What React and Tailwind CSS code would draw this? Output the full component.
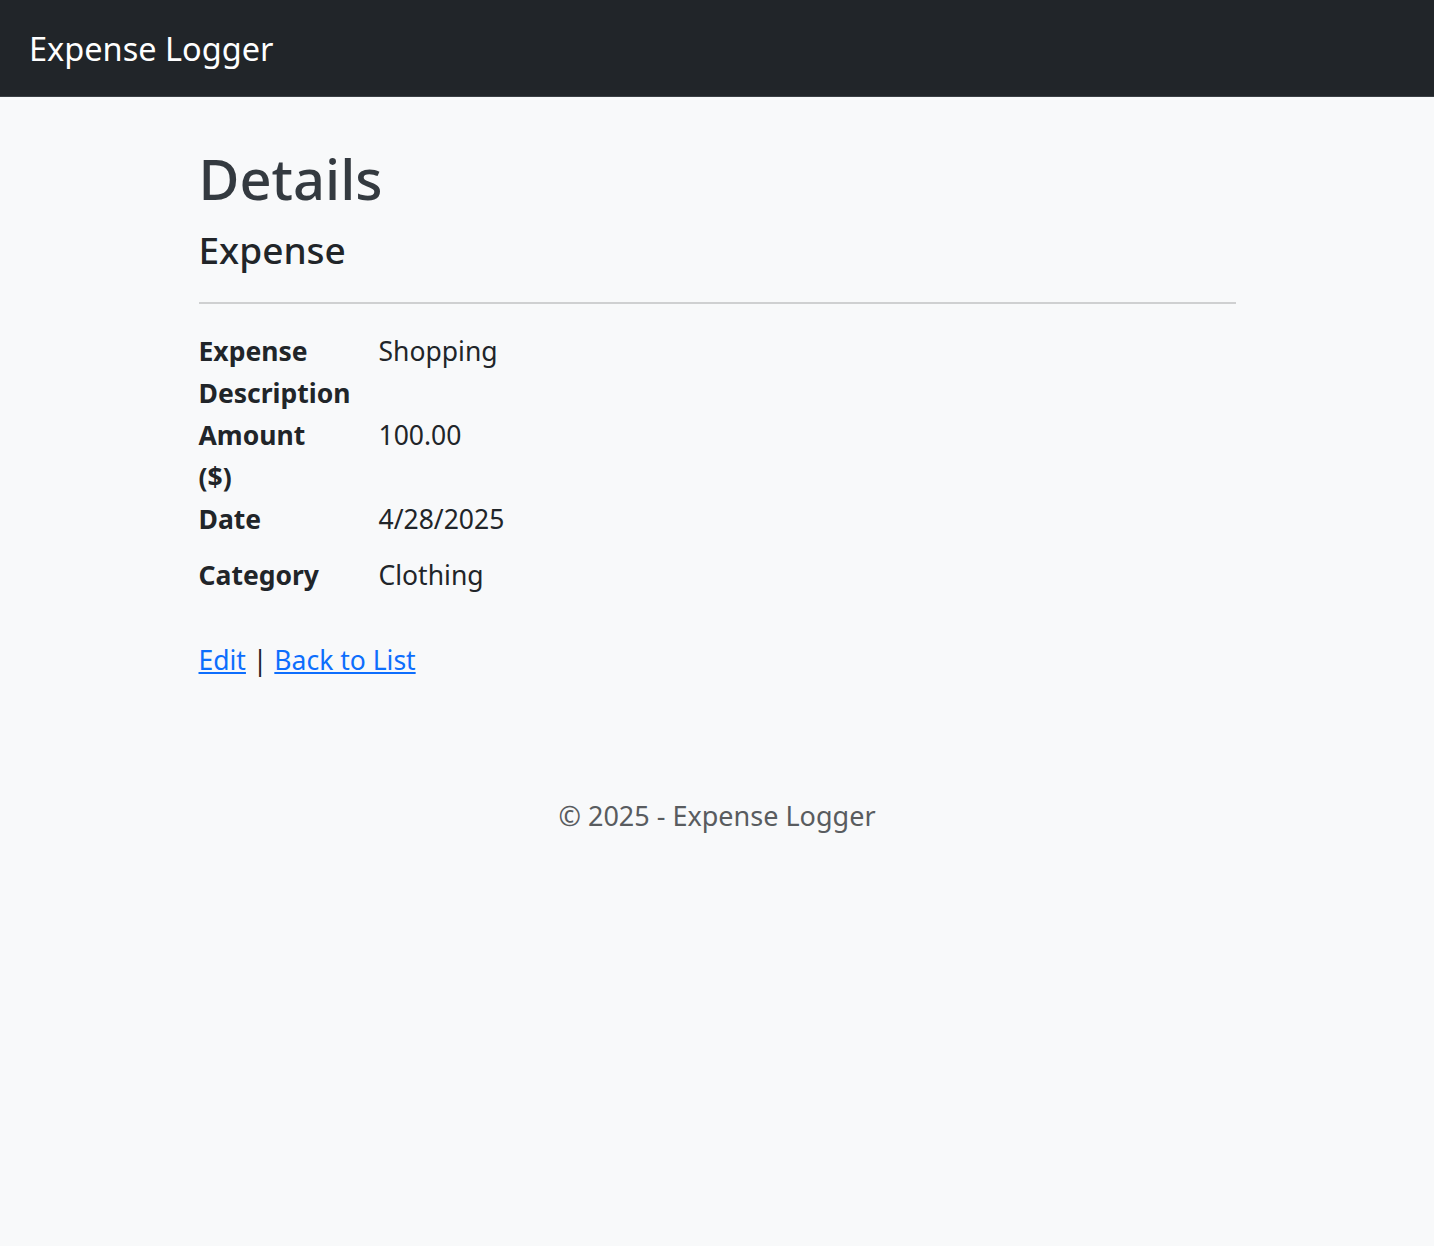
import React from 'react';

// Linhas da lista de detalhes
const detalhes = [
  { rotulo: 'Expense Description', valor: 'Shopping' },
  { rotulo: 'Amount ($)', valor: '100.00' },
  { rotulo: 'Date', valor: '4/28/2025' },
  { rotulo: 'Category', valor: 'Clothing' },
];

export default function App() {
  return (
    <div className="min-h-[1246px] bg-[#f8f9fa] text-[#212529] font-['Noto_Sans',sans-serif]">
      {/* Barra de navegação */}
      <nav className="h-[97px] bg-[#212529] border-b border-[#3a3f44] flex items-center px-[29px]">
        <a href="#" className="text-white text-[32.5px] leading-none mt-[2px]">Expense Logger</a>
      </nav>

      <main className="max-w-[1037px] mx-auto">
        <h1 className="mt-[45px] text-[56px] leading-[72px] font-medium text-[#343a40]">Details</h1>

        <div className="mt-[12px]">
          <h4 className="text-[37px] leading-[48px] font-medium">Expense</h4>
          <hr className="mt-[28px] border-0 h-[2px] bg-[#cfd0d1]" />

          <dl className="mt-[26px] text-[26.5px] leading-[42px]">
            {detalhes.map((d) => (
              <div key={d.rotulo} className="flex">
                <dt className="w-[180px] pr-[42px] font-bold shrink-0">{d.rotulo}</dt>
                <dd className="mb-[14px]">{d.valor}</dd>
              </div>
            ))}
          </dl>
        </div>

        <div className="mt-[29px] text-[26.5px] leading-[42px]">
          <a href="#" className="text-[#0d6efd] underline">Edit</a> | <a href="#" className="text-[#0d6efd] underline">Back to List</a>
        </div>
      </main>

      <footer className="mt-[114px] text-center text-[27px] leading-[42px] text-[#595c5f]">
        © 2025 - Expense Logger
      </footer>
    </div>
  );
}
